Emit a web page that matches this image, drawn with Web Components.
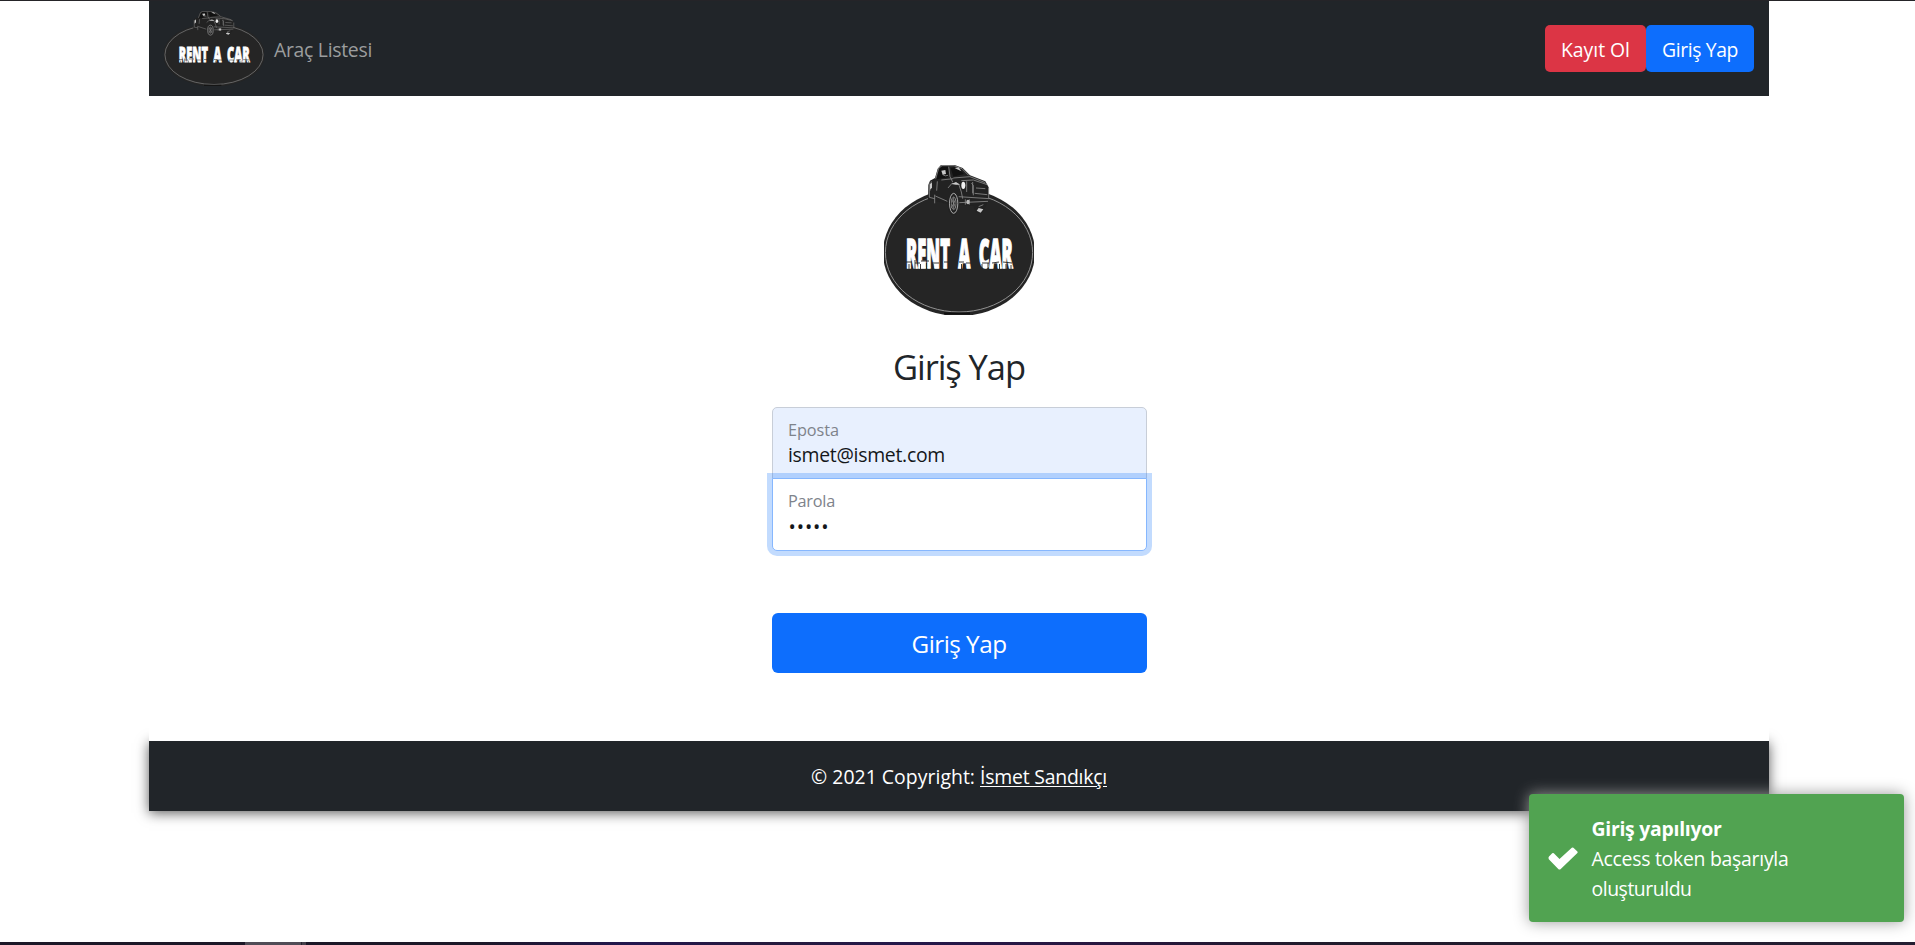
<!DOCTYPE html>
<html lang="tr">
<head>
<meta charset="utf-8">
<title>Rent A Car</title>
<style>
html,body{margin:0;height:100%;background:#fff}
body{font-family:"Open Sans","Noto Sans",sans-serif;color:#212529;overflow:hidden}
</style>
</head>
<body>
<app-shell></app-shell>
<script>
const define=(name,html,after)=>{
  const t=document.createElement('template');t.innerHTML=html;
  customElements.define(name,class extends HTMLElement{
    constructor(){super();this.attachShadow({mode:'open'}).appendChild(t.content.cloneNode(true));}
    connectedCallback(){if(after)after.call(this,this.shadowRoot);}
  });
};

/* Text run tracked to a given advance width */
define('fit-text','<style>:host{display:inline-block;white-space:pre}span{display:inline-block}</style><span><slot></slot></span>',function(r){
  const s=r.querySelector('span'),w=+this.getAttribute('w');
  this.style.width=w+'px';
  s.style.letterSpacing=(w-s.getBoundingClientRect().width)/this.textContent.length+'px';
});

define('brand-logo',`<style>:host{display:block}svg{display:block;width:100%;height:100%}
text{font:800 41px "Open Sans","Noto Sans",sans-serif;fill:#fff;stroke:#fff;stroke-width:1.6px}</style>
<svg viewBox="0 0 150 150" preserveAspectRatio="none">
<ellipse cx="75" cy="87.5" rx="76" ry="63.5" fill="#252525"/>
<ellipse cx="75" cy="87.5" rx="73.6" ry="59.5" fill="none" stroke="#929292" stroke-width="1"/>
<g transform="translate(36 -5) scale(.3333)">
<path d="M24 122L25 75L30 62L45 54L53 26L62 16L104 15L128 24L150 46L196 64L206 82V112L198 138L186 160L168 158L160 138L116 134L108 164L96 166L86 154L82 132L24 118Z" fill="#222"/>
<path d="M56 28L65 19H88L84 52L50 58ZM92 24L112 20L132 42L100 50Z" fill="#111"/>
<g fill="none" stroke="#8a8a8a" stroke-width="2.500">
<path d="M47 56L56 25L66 17H102L126 26L146 46M86 20L90 50L98 66M68 44Q76 50 84 46M28 70V112L44 116M34 64L30 92M52 64L50 92M46 108L82 124M64 60L100 56M100 54L150 50L196 68M124 62L160 60L202 74M158 66V100M154 70L160 76V106M164 100L202 104M116 110L208 116M118 128L204 124M168 84L196 86M84 84L96 70L116 72L124 96L128 116M136 118V134M148 118V134M206 84V114M176 140L190 134M140 64V96"/>
<ellipse cx="101" cy="130" rx="12.500" ry="30" stroke="#c4c4c4"/><ellipse cx="101" cy="130" rx="7" ry="19"/>
<path d="M94 116L108 144M108 116L94 144M101 112V148M44 104V130"/></g>
<ellipse cx="130" cy="76" rx="6" ry="11" fill="#f0f0f0"/><ellipse cx="144" cy="126" rx="5" ry="7" fill="#bbb"/>
<path d="M64 32L76 30L78 42L68 44ZM170 152L176 144L190 148L182 158ZM104 24L116 22L124 34L116 30ZM94 72L108 66L120 74L108 74ZM30 72L36 68V84L30 88Z" fill="#c8c8c8"/>
</g>
<text transform="translate(22 102.500) scale(.42 1)" textLength="254" lengthAdjust="spacingAndGlyphs" style="word-spacing:10px">RENT A CAR</text>
<path d="M22 97h6M31 98h5M37 96h8M48 98h7M60 97h5M75 97h5M82 98h5M98 98h7M108 98l7-1M119 97l9 1" stroke="#252525" stroke-width=".9" fill="none"/>
<path d="M25 99v6M31 95v10M36.500 99v7M42.500 98v7M49 99v6M77.500 99v7M98 99v6M104 98v7M115.500 99v6M122 99v6M127 100v6" stroke="#252525" stroke-width=".9"/>
<path d="M60 148.500H86" stroke="#101010" stroke-width="2"/>
</svg>`);

define('ui-button',`<style>:host{display:flex;align-items:center;justify-content:center;box-sizing:border-box;height:47px;border-radius:5px;background:#0d6efd;color:#fff;font-size:19.400px;line-height:30px;padding-top:3px}
:host([variant=danger]){background:#dc3545}
:host([size=lg]){height:60px;border-radius:6px;font-size:24.300px;line-height:38px;padding-top:1px}</style><slot></slot>`);

define('nav-bar',`<style>:host{display:flex;box-sizing:border-box;height:96px;padding:0 15px;align-items:center;background:#212529;border-top:1px solid #252428}
brand-logo{width:100px;height:75px}
.link{flex:1;margin-left:10px;padding-top:3px;font-size:19.400px;line-height:30px;color:#9b9d9e}
.a{width:101px}.b{width:108px}.acts{display:flex}</style>
<brand-logo></brand-logo><div class="link"><fit-text w="98">Araç Listesi</fit-text></div>
<div class="acts"><ui-button class="a" variant="danger"><fit-text w="69">Kayıt Ol</fit-text></ui-button><ui-button class="b"><fit-text w="76">Giriş Yap</fit-text></ui-button></div>`);

define('form-field',`<style>:host{display:block;position:relative;box-sizing:border-box;height:72px;border:1px solid #c8ced8;border-radius:5px 5px 0 0;background:#e8f0fe;padding:10px 15.500px 0}
:host([focused]){height:73px;margin-top:-1px;border-color:#86b7fe;border-radius:0 0 5px 5px;background:#fff;box-shadow:0 0 0 5px rgba(13,110,253,.25)}
.l{font-size:16.300px;line-height:24px;height:24px;color:#7e838b}.v{font-size:19.400px;line-height:28px;height:28px;color:#14171a;margin-top:-1px}
:host([focused]) .v{margin-top:0;padding-left:.5px}</style>
<div class="l"><slot name="label"></slot></div><div class="v"><slot></slot></div>`);

define('login-form',`<style>:host{display:flex;flex-direction:column;align-items:center;position:relative;box-sizing:border-box;height:645px;padding-top:69px;background:#fff;z-index:1}
brand-logo{width:150px;height:150px}
h1{margin:31px 0 19px;font-size:34.500px;line-height:42px;font-weight:400}
.f{width:375px}ui-button{margin-top:62px}</style>
<brand-logo></brand-logo><h1><fit-text w="132">Giriş Yap</fit-text></h1>
<div class="f"><form-field><fit-text slot="label" w="51">Eposta</fit-text><fit-text w="157">ismet@ismet.com</fit-text></form-field>
<form-field focused><fit-text slot="label" w="47">Parola</fit-text><fit-text w="41">•••••</fit-text></form-field>
<ui-button size="lg"><fit-text w="95">Giriş Yap</fit-text></ui-button></div>`);

define('page-footer',`<style>:host{display:flex;justify-content:center;align-items:center;gap:5px;box-sizing:border-box;height:70px;padding:2px 0 0;background:#212529;color:#fff;font-size:19.400px;line-height:30px;box-shadow:0 2px 12px rgba(0,0,0,.65)}
a{color:#fff;text-decoration:underline;text-decoration-thickness:1px;text-underline-offset:2px}</style>
<fit-text w="164">© 2021 Copyright:</fit-text><a><fit-text w="127"><u>İsmet Sandıkçı</u></fit-text></a>`);

define('toast-message',`<style>:host{position:absolute;left:1529px;top:794px;display:flex;align-items:center;box-sizing:border-box;width:375px;height:128px;padding-left:19px;border-radius:4px;background:#51a351;box-shadow:0 0 15px #999;color:#fff;z-index:2}
svg{width:30px;height:23px;margin-right:13.500px}
.t{font-size:19.400px;line-height:30px;padding-top:1px}.t div{height:30px}b{font-weight:700}</style>
<svg viewBox="0 0 30 23"><path d="M1 9.500L4.200 6.300Q5 5.800 5.800 6.300L11.500 12L23.800 .7Q24.600 .2 25.400 .7L29.400 4.500Q30 5.300 29.400 6.100L12.500 22.200Q11.500 22.800 10.500 22.200L.8 12.200Q0 10.800 1 9.500Z" fill="#fff"/></svg>
<div class="t"><div><b><fit-text w="130">Giriş yapılıyor</fit-text></b></div><div><fit-text w="197">Access token başarıyla</fit-text></div><div><fit-text w="100">oluşturuldu</fit-text></div></div>`);

define('task-strip',`<style>:host{position:absolute;left:0;bottom:0;width:100%;height:3px;background:linear-gradient(90deg,#1d1828 0,#1d1828 25%,#23164f 33%,#261a3d 40%,#25184b 47%,#28163f 58%,#211b2c 68%,#241e32)}
i{display:block;width:61px;height:3px;margin-left:245px;background:linear-gradient(90deg,#504c56 56px,#25212d 56px,#25212d 57px,#45414b 57px)}</style><i></i>`);

define('app-shell',`<style>:host{display:block;position:relative;height:945px;overflow:hidden}
.top{height:1px;margin-bottom:-1px;background:#252428}
main{width:1620px;margin-left:149px}</style>
<div class="top"></div><main><nav-bar></nav-bar><login-form></login-form><page-footer></page-footer></main>
<toast-message></toast-message><task-strip></task-strip>`);
</script>
</body>
</html>
